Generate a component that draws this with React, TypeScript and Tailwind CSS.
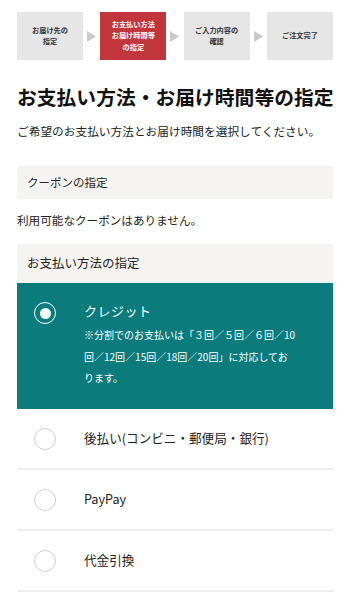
const font = "font-['Noto_Sans_CJK_JP','Noto_Sans',sans-serif]";

function Step({ lines, active }: { lines: string[]; active?: boolean }) {
  return (
    <div
      className={`flex h-[48px] w-[66px] flex-col items-center justify-center text-center text-[7.2px] font-bold leading-[11.5px] ${
        active ? "bg-[#c1363b] text-white" : "bg-[#e6e6e6] text-[#333]"
      }`}
    >
      {lines.map((l) => (
        <span key={l}>{l}</span>
      ))}
    </div>
  );
}

function Arrow() {
  return (
    <svg width="9" height="11" viewBox="0 0 9 11" className="shrink-0">
      <polygon points="0,0 9,5.5 0,11" fill="#cacaca" />
    </svg>
  );
}

function Radio({ checked }: { checked?: boolean }) {
  if (checked) {
    return (
      <div className="flex h-[22px] w-[22px] shrink-0 items-center justify-center rounded-full border-[1.5px] border-white">
        <div className="h-[11px] w-[11px] rounded-full bg-white" />
      </div>
    );
  }
  return <div className="h-[22px] w-[22px] shrink-0 rounded-full border border-[#cfcfcf] bg-white" />;
}

function PayRow({ label }: { label: string }) {
  return (
    <div className="flex h-[61px] items-center border-b-2 border-[#eeeeee] pl-[17px]">
      <Radio />
      <span className="ml-[28px] text-[12.6px] text-[#222]">{label}</span>
    </div>
  );
}

export default function App() {
  return (
    <div className={`w-[350px] bg-white pb-[20px] text-[#222] ${font}`}>
      {/* steps */}
      <div className="flex items-center justify-between px-[17px] pt-[12px]">
        <Step lines={["お届け先の", "指定"]} />
        <Arrow />
        <Step lines={["お支払い方法", "お届け時間等", "の指定"]} active />
        <Arrow />
        <Step lines={["ご入力内容の", "確認"]} />
        <Arrow />
        <Step lines={["ご注文完了"]} />
      </div>

      <div className="px-[17px]">
        <h1 className="mt-[25px] whitespace-nowrap text-[19.8px] font-bold leading-[24px] text-[#111]">
          お支払い方法・お届け時間等の指定
        </h1>
        <p className="mt-[14px] whitespace-nowrap text-[11.7px] leading-[16px]">
          ご希望のお支払い方法とお届け時間を選択してください。
        </p>

        <div className="mt-[27px] flex h-[33px] items-center bg-[#f5f4f2] pl-[10px] text-[11.5px]">
          クーポンの指定
        </div>
        <p className="mt-[13px] text-[11.6px] leading-[16px]">利用可能なクーポンはありません。</p>

        <div className="mt-[16px] flex h-[39px] items-center bg-[#f5f4f2] pl-[10px] text-[12.5px]">
          お支払い方法の指定
        </div>

        <div className="flex h-[126px] bg-[#0b7b7c] pl-[17px] pt-[19px] text-white">
          <Radio checked />
          <div className="ml-[28px]">
            <div className="text-[13px] leading-[18px] tracking-[0.04em]">クレジット</div>
            <p className="mt-[4px] text-[10px] leading-[21.5px]">
              ※分割でのお支払いは「３回／５回／６回／10
              <br />
              回／12回／15回／18回／20回」に対応してお
              <br />
              ります。
            </p>
          </div>
        </div>

        <PayRow label="後払い(コンビニ・郵便局・銀行)" />
        <PayRow label="PayPay" />
        <PayRow label="代金引換" />
      </div>
    </div>
  );
}
